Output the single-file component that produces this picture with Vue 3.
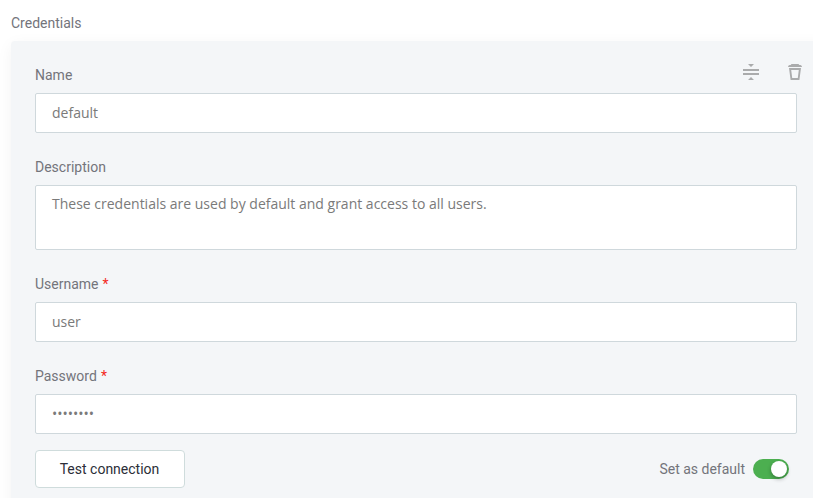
<script setup>
import { ref } from 'vue'

const name = ref('default')
const description = ref('These credentials are used by default and grant access to all users.')
const username = ref('user')
const password = ref('••••••••')
const isDefault = ref(true)
</script>

<template>
  <main class="page">
    <h2 class="title">Credentials</h2>
    <section class="card">
      <div class="form">
        <div class="field">
          <div class="head">
            <label class="label" for="name">Name</label>
            <div class="actions">
              <svg class="icon" width="16" height="16" viewBox="0 0 16 16" aria-hidden="true">
                <path d="M5 0h6L8 3zM0 5h16v2H0zM0 9h16v2H0zM8 13l3 3H5z" />
              </svg>
              <svg class="icon" width="14" height="16" viewBox="0 0 14 16" aria-hidden="true">
                <path d="M3.5 0h7l.8 1h1.200Q14 1.300 14 3H0Q0 1.300 1.500 1h1.200z" />
                <path fill-rule="evenodd" d="M1 4h12l-1.600 12H2.600zM3.200 6l1 8h5.600l1-8z" />
              </svg>
            </div>
          </div>
          <input id="name" v-model="name" class="control" type="text" />
        </div>
        <div class="field">
          <label class="label" for="description">Description</label>
          <textarea id="description" v-model="description" class="control area"></textarea>
        </div>
        <div class="field">
          <label class="label" for="username">Username <span class="star">*</span></label>
          <input id="username" v-model="username" class="control" type="text" />
        </div>
        <div class="field">
          <label class="label" for="password">Password <span class="star">*</span></label>
          <input id="password" v-model="password" class="control" type="text" />
        </div>
      </div>
      <div class="footer">
        <button class="test" type="button">Test connection</button>
        <div class="default">
          <span>Set as default</span>
          <button
            class="toggle"
            :class="{ on: isDefault }"
            type="button"
            role="switch"
            :aria-checked="isDefault"
            @click="isDefault = !isDefault"
          >
            <span class="knob"></span>
          </button>
        </div>
      </div>
    </section>
  </main>
</template>

<style>
body {
  margin: 0;
  background: #fff;
  overflow: hidden;
}
</style>

<style scoped>
.page {
  box-sizing: border-box;
  height: 498px;
  padding: 13px 0 0 11px;
  overflow: hidden;
  font-family: Roboto, sans-serif;
  font-size: 14px;
  line-height: 20px;
  color: #73747b;
}
.title {
  margin: 0 0 8px;
  font-size: 14px;
  font-weight: 400;
}
.card {
  box-sizing: border-box;
  width: 826px;
  height: 500px;
  padding: 24px;
  border-radius: 4px;
  background: #f4f6f8;
  box-shadow: 0 4px 16px rgba(0, 0, 0, 0.05);
}
.form {
  display: flex;
  flex-direction: column;
  gap: 24px;
  width: 762px;
}
.field {
  display: flex;
  flex-direction: column;
  gap: 8px;
}
.head {
  display: flex;
  justify-content: space-between;
  height: 20px;
  margin-right: -5px;
}
.label {
  display: block;
}
.actions {
  display: flex;
  gap: 29px;
  margin-top: -1px;
}
.icon {
  display: block;
  fill: #aaabac;
}
.star {
  margin-left: 0.6px;
  color: #f3291c;
}
.control {
  display: block;
  box-sizing: border-box;
  width: 762px;
  height: 40px;
  margin: 0;
  padding: 0 16px 2px;
  border: 1px solid #cfd8dc;
  border-radius: 2px;
  outline: none;
  background: #fff;
  color: #7a7a7a;
  font: 14px/20px 'Open Sans', sans-serif;
}
.area {
  height: 65px;
  padding: 8px 16px;
  resize: none;
  overflow: hidden;
}
.footer {
  display: flex;
  align-items: center;
  justify-content: space-between;
  width: 754px;
  margin-top: 16px;
}
.test {
  box-sizing: border-box;
  width: 150px;
  height: 38px;
  padding: 0 1px 0 0;
  border: 1px solid #cfdcdc;
  border-radius: 4px;
  background: #fff;
  color: #2c2e38;
  font: 14px/20px Roboto, sans-serif;
}
.default {
  display: flex;
  align-items: center;
  gap: 8px;
}
.toggle {
  display: flex;
  align-items: center;
  width: 36px;
  height: 20px;
  padding: 0 2px;
  border: 0;
  border-radius: 10px;
  background: #b0b5ba;
}
.toggle.on {
  justify-content: flex-end;
  background: #4caf50;
}
.knob {
  width: 16px;
  height: 16px;
  border-radius: 50%;
  background: #fff;
  box-shadow: 0 2px 4px rgba(0, 0, 0, 0.3);
}
</style>
